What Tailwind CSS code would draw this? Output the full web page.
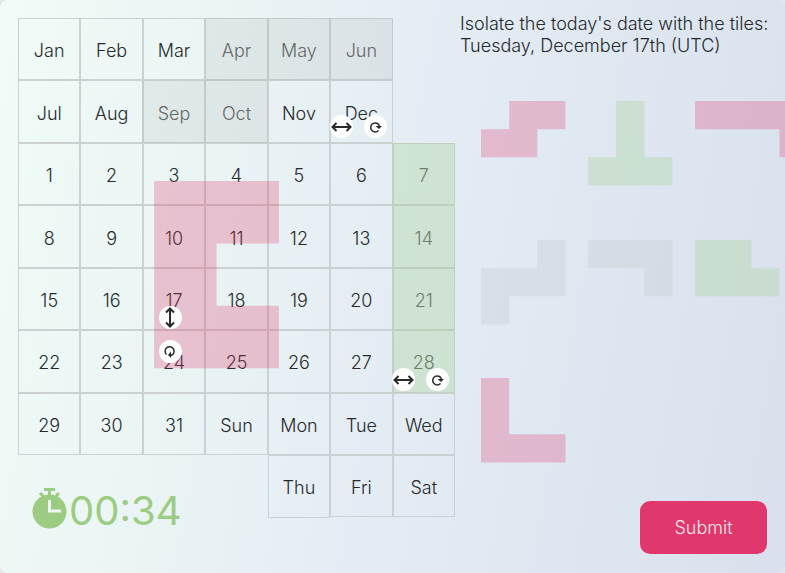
<!DOCTYPE html>
<html lang="en">
<head>
    <meta charset="UTF-8">
    <meta name="viewport" content="width=device-width, initial-scale=1.0">
    <title>Calendar Puzzle</title>
    <script src="https://cdn.jsdelivr.net/npm/@tailwindcss/browser@4"></script>
</head>
<body class="bg-[#e4e8ea] font-['Inter',sans-serif] font-light text-[#25292c]">
    <main class="grid min-h-screen grid-cols-[437fr_307fr] gap-x-[5px] overflow-hidden rounded-lg bg-[linear-gradient(100deg,#f0fcf7_0%,#e9f3f4_30%,#e3ebf3_55%,#dde6f0_78%,#dae0ed_100%)] px-[18px] pt-[18px] pb-[19px]">
        <section class="relative self-start" aria-label="Board">
            <div id="board" class="grid grid-cols-7 text-lg"></div>

            <!-- placed pieces -->
            <svg class="pointer-events-none absolute inset-0 size-full" viewBox="0 0 7 8" preserveAspectRatio="none">
                <path d="M3 0H6V1H4V2H2V1H3Z" fill="#969696" fill-opacity=".13"/>
                <path d="M2.18 2.61H4.18V3.61H3.18V4.61H4.18V5.61H2.18Z" fill="#e0386c" fill-opacity=".27"/>
                <path d="M6 2H7V6H6Z" fill="#9ccb82" fill-opacity=".28"/>
            </svg>

            <!-- flip / rotate controls of each placed piece -->
            <div class="absolute top-[19.4%] left-[71.5%] flex gap-[11px]">
                <button class="flip" aria-label="Flip"></button>
                <button class="rotate" aria-label="Rotate"></button>
            </div>
            <div class="absolute top-[57.6%] left-[32.2%] flex flex-col gap-[11px]">
                <button class="flip turned" aria-label="Flip"></button>
                <button class="rotate turned" aria-label="Rotate"></button>
            </div>
            <div class="absolute top-[70%] left-[85.5%] flex gap-[11px]">
                <button class="flip" aria-label="Flip"></button>
                <button class="rotate" aria-label="Rotate"></button>
            </div>
        </section>

        <aside class="flex min-w-0 flex-col">
            <p class="-mt-[5px] text-lg leading-[22px] whitespace-nowrap">Isolate the today's date with the tiles:<br>Tuesday, December 17th (UTC)</p>
            <div id="tray" class="mt-11 -mr-[35px] ml-[21px] grid grid-cols-3 gap-y-[54px]"></div>
            <button class="mt-auto h-[53px] w-[127px] self-end rounded-[10px] bg-[#e0386c] text-lg text-[#fbe9ef]">Submit</button>
        </aside>
    </main>

    <script>
        const labels = ["Jan", "Feb", "Mar", "Apr", "May", "Jun", "", "Jul", "Aug", "Sep", "Oct", "Nov", "Dec", ""];
        for (let day = 1; day <= 31; day++) labels.push(day);
        labels.push("Sun", "Mon", "Tue", "Wed", "timer", "Thu", "Fri", "Sat");
        const covered = ["Apr", "May", "Jun", "Sep", "Oct", 7, 14, 21, 28];

        const timer = `
            <div class="col-span-4 flex h-0 items-start gap-[2px] pt-[33px] pl-[14px] text-[40px] leading-[46px] font-normal text-[#9ccb82]">
                <svg class="h-[41px] w-[35px] shrink-0" viewBox="0 0 35 41" fill="none" stroke="currentColor">
                    <circle cx="17.5" cy="23.5" r="17" fill="currentColor" stroke="none"/>
                    <path d="M12 1.5H23M17.5 1V7M8 5L11 8M27 5L24 8" stroke-width="3"/>
                    <path d="M17.5 12V23H29" stroke="#edf8f5" stroke-width="3"/>
                </svg>
                <time>00:34</time>
            </div>`;

        document.getElementById("board").innerHTML = labels.map(label => {
            if (label === "timer") return timer;
            if (label === "") return "<div></div>";
            const tone = covered.includes(label) ? "text-[#5c6262]" : "";
            return `<div class="flex aspect-square items-center justify-center border border-[#cbd1d2] pt-1 ${tone}">${label}</div>`;
        }).join("");

        const tiles = [
            ["M1 0H3V1H2V2H0V1H1Z", "#e0386c", .27],
            ["M1 0H2V2H3V3H0V2H1Z", "#9ccb82", .28],
            ["M0 0H4V2H3V1H0Z", "#e0386c", .27],
            ["M2 0H3V2H1V3H0V1H2Z", "#969696", .12],
            ["M0 0H3V2H2V1H0Z", "#969696", .12],
            ["M0 0H2V1H3V2H0Z", "#9ccb82", .28],
            ["M0 0H1V2H3V3H0Z", "#e0386c", .27]
        ];
        document.getElementById("tray").innerHTML = tiles.map(([path, color, opacity]) => `
            <svg class="aspect-square w-[79%] overflow-visible" viewBox="0 0 3 3">
                <path d="${path}" fill="${color}" fill-opacity="${opacity}"/>
            </svg>`).join("");

        const icons = {
            flip: `<path d="M2.5 12H20.5M6.5 8L2.5 12L6.5 16M16.5 8L20.5 12L16.5 16" stroke-width="2"/>`,
            rotate: `<path d="M14.5 15.5A4.5 4.5 0 1 1 15.5 11" stroke-width="1.5"/><path d="M11.5 11H18L15 14Z" fill="currentColor" stroke="none"/>`
        };
        for (const name in icons) {
            document.querySelectorAll("." + name).forEach(button => {
                const turned = button.classList.contains("turned") ? "rotate-90" : "";
                button.className = `block size-[23px] rounded-full bg-white text-[#2b2b2b] ${turned}`;
                button.innerHTML = `<svg class="size-[23px]" viewBox="0 0 23 23" fill="none" stroke="currentColor">${icons[name]}</svg>`;
            });
        }
    </script>
</body>
</html>
